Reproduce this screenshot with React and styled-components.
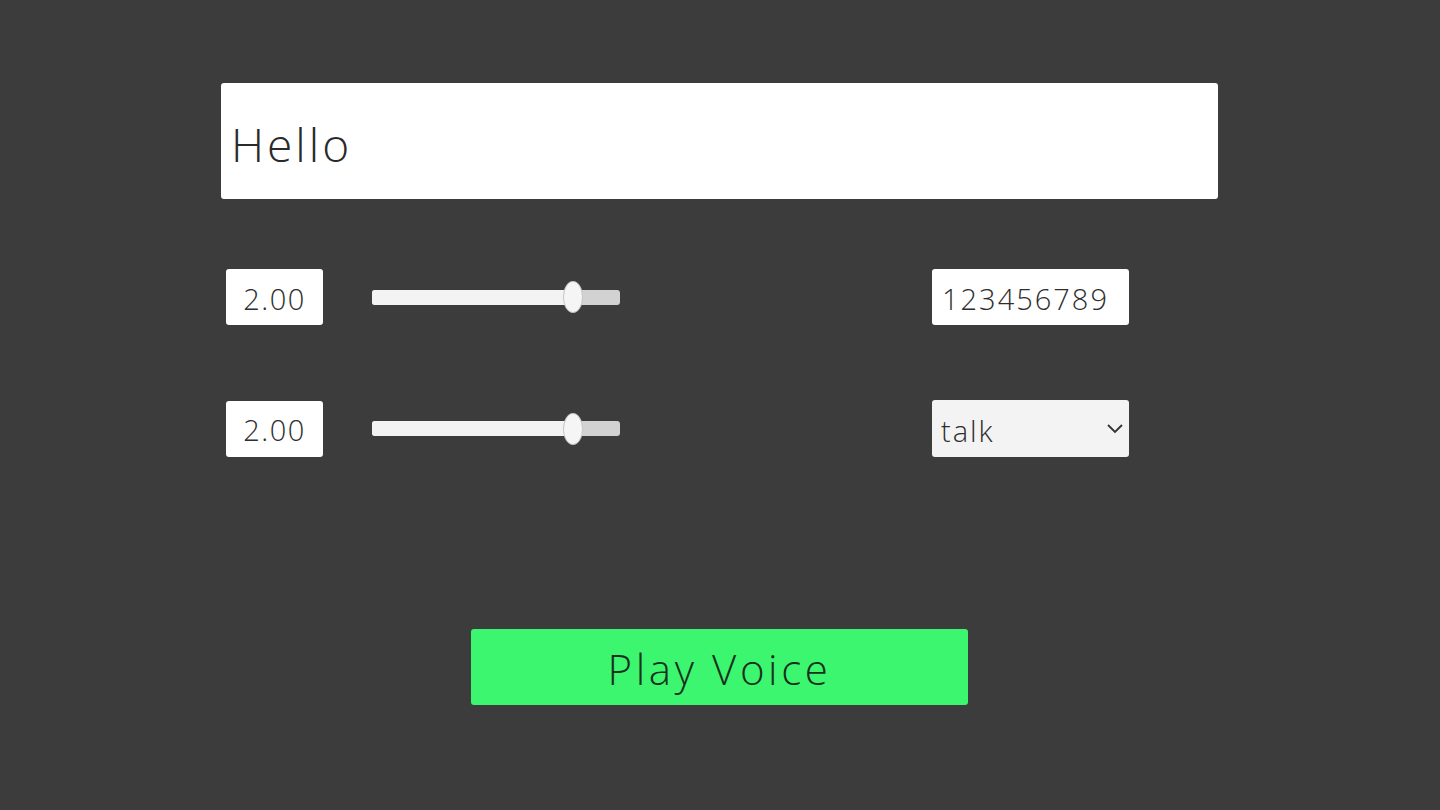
import React, { useState } from 'react'
import styled, { createGlobalStyle } from 'styled-components'

const GlobalStyle = createGlobalStyle`
  html, body {
    margin: 0;
    padding: 0;
    background: #3c3c3c;
  }
  body {
    font-family: "Open Sans", "Noto Sans", sans-serif;
    font-weight: 300;
  }
`

const Page = styled.div`
  width: 1440px;
  height: 810px;
  box-sizing: border-box;
  padding: 83px 0 0 221px;
`

const Panel = styled.div`
  width: 997px;
  display: flex;
  flex-direction: column;
`

const TextInput = styled.input`
  box-sizing: border-box;
  width: 997px;
  height: 116px;
  border: none;
  border-radius: 3px;
  background: #fff;
  padding: 6px 10px 0;
  font-family: inherit;
  font-weight: 300;
  font-size: 46px;
  letter-spacing: 3px;
  color: #2a2a2a;
  outline: none;
`

const Row = styled.div`
  display: flex;
  align-items: center;
  padding-left: 5px;
  margin-top: ${p => p.$top}px;
`

const Box = styled.input`
  box-sizing: border-box;
  width: ${p => p.$w}px;
  height: 56px;
  border: none;
  border-radius: 3px;
  background: #fff;
  padding: 2px 0 0 ${p => p.$pad}px;
  text-align: ${p => p.$align || 'left'};
  font-family: inherit;
  font-weight: 300;
  font-size: 29px;
  letter-spacing: ${p => p.$ls}px;
  color: #2e2e2e;
  outline: none;
`

const SliderWrap = styled.div`
  position: relative;
  width: 248px;
  height: 30px;
  margin-left: 49px;
  display: flex;
  align-items: center;
`

const Track = styled.div`
  width: 100%;
  height: 15px;
  border-radius: 3px;
  background: #d2d2d2;
  overflow: hidden;
`

const Fill = styled.div`
  height: 100%;
  background: #f3f3f3;
`

const Thumb = styled.div`
  position: absolute;
  top: 0;
  width: 18px;
  height: 30px;
  margin-left: -9px;
  border-radius: 50%;
  background: #f5f5f5;
  box-shadow: 0 0 0 1px #c8c8c8;
`

const Right = styled.div`
  margin-left: 312px;
  position: relative;
`

const Select = styled.select`
  box-sizing: border-box;
  width: 197px;
  height: 57px;
  border: none;
  border-radius: 3px;
  background: #f3f3f3;
  padding: 4px 0 0 9px;
  font-family: inherit;
  font-weight: 300;
  font-size: 29px;
  letter-spacing: 2px;
  color: #2e2e2e;
  appearance: none;
  outline: none;
`

const Chevron = styled.svg`
  position: absolute;
  right: 5px;
  top: 23px;
  pointer-events: none;
`

const ButtonRow = styled.div`
  display: flex;
  justify-content: center;
  margin-top: 172px;
`

const PlayButton = styled.button`
  width: 497px;
  height: 76px;
  border: none;
  border-radius: 3px;
  background: #3df66f;
  color: #17311f;
  font-family: inherit;
  font-weight: 300;
  font-size: 42px;
  letter-spacing: 3.6px;
  padding-top: 4px;
  cursor: pointer;
`

const Slider = ({ value, max }) => {
  const pct = (value / max) * 100
  return (
    <SliderWrap>
      <Track>
        <Fill style={{ width: `${pct}%` }} />
      </Track>
      <Thumb style={{ left: `${pct}%` }} />
    </SliderWrap>
  )
}

const App = () => {
  const [text, setText] = useState('Hello')
  const [speed, setSpeed] = useState('2.00')
  const [pitch, setPitch] = useState('2.00')
  const [id, setId] = useState('123456789')
  const [mode, setMode] = useState('talk')

  return (
    <>
      <GlobalStyle />
      <Page>
        <Panel>
          <TextInput value={text} onChange={e => setText(e.target.value)} />
          <Row $top={70}>
            <Box $w={97} $pad={0} $align="center" $ls={1.5} value={speed} onChange={e => setSpeed(e.target.value)} />
            <Slider value={parseFloat(speed) || 0} max={2.47} />
            <Right>
              <Box $w={197} $pad={10} $ls={2} value={id} onChange={e => setId(e.target.value)} />
            </Right>
          </Row>
          <Row $top={75}>
            <Box $w={97} $pad={0} $align="center" $ls={1.5} value={pitch} onChange={e => setPitch(e.target.value)} />
            <Slider value={parseFloat(pitch) || 0} max={2.47} />
            <Right>
              <Select value={mode} onChange={e => setMode(e.target.value)}>
                <option value="talk">talk</option>
                <option value="sing">sing</option>
              </Select>
              <Chevron width="18" height="11" viewBox="0 0 18 11">
                <path d="M2 2 L9 9 L16 2" fill="none" stroke="#333" strokeWidth="1.8" />
              </Chevron>
            </Right>
          </Row>
          <ButtonRow>
            <PlayButton>Play Voice</PlayButton>
          </ButtonRow>
        </Panel>
      </Page>
    </>
  )
}

export default App
